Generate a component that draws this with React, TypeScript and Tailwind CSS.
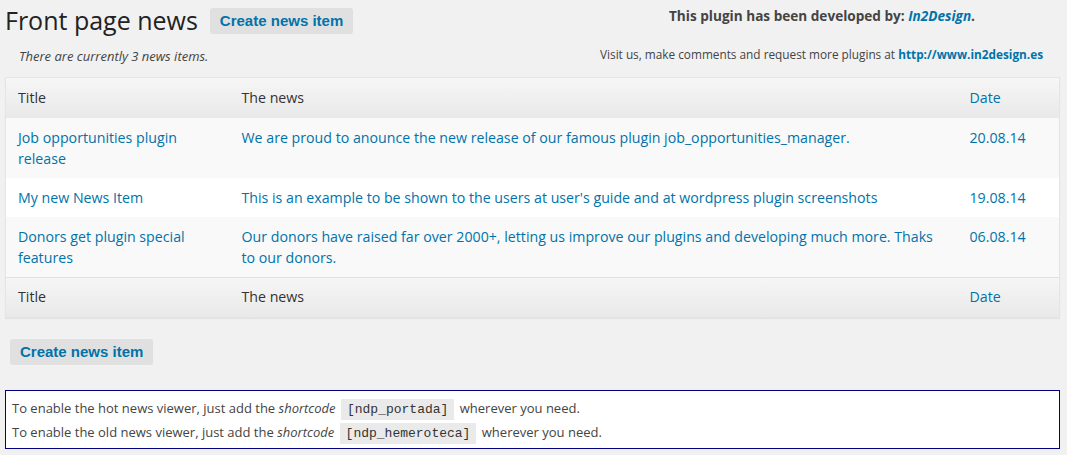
import React from 'react'

interface NewsItem {
  id: number
  title: string
  body: string
  date: string
}

const news: NewsItem[] = [
  {
    id: 1,
    title: 'Job opportunities plugin release',
    body: 'We are proud to anounce the new release of our famous plugin job_opportunities_manager.',
    date: '20.08.14',
  },
  {
    id: 2,
    title: 'My new News Item',
    body: "This is an example to be shown to the users at user's guide and at wordpress plugin screenshots",
    date: '19.08.14',
  },
  {
    id: 3,
    title: 'Donors get plugin special features',
    body: 'Our donors have raised far over 2000+, letting us improve our plugins and developing much more. Thaks to our donors.',
    date: '06.08.14',
  },
]

const CreateButton = () => (
  <button className="h-[26px] px-[10px] rounded-[3px] bg-[#e0e0e0] text-[#0073aa] font-['Liberation_Sans',sans-serif] font-bold text-[15px] leading-[26px]">
    Create news item
  </button>
)

const HeadRow = () => (
  <tr className="h-[40px] bg-gradient-to-b from-[#f6f6f6] to-[#e9e9e9] text-[14.2px] text-[#333]">
    <th className="w-[224px] pl-[12px] text-left font-normal">Title</th>
    <th className="pl-[12px] text-left font-normal">The news</th>
    <th className="w-[102px] pl-[12px] text-left font-normal text-[#0073aa]">Date</th>
  </tr>
)

const Shortcode = ({ children }: { children: React.ReactNode }) => (
  <code className="mx-[2px] bg-[#eaeaea] px-[6px] py-[3px] font-['Liberation_Mono',monospace] text-[13px] text-[#333]">
    {children}
  </code>
)

const App = () => {
  return (
    <div className="min-h-[455px] bg-[#f1f1f1] font-['Open_Sans',sans-serif] text-[#444] pt-[4px] pl-[5px] pr-[7px]">
      <div className="flex justify-between">
        <div>
          <div className="flex items-center">
            <h1 className="text-[25px] leading-[32px] text-[#222] font-normal">Front page news</h1>
            <div className="ml-[12px] mt-[2px]">
              <CreateButton />
            </div>
          </div>
          <p className="mt-[11px] pl-[14px] text-[13px] italic text-[#444] leading-[18px]">
            There are currently 3 news items.
          </p>
        </div>
        <div className="text-right">
          <p className="pt-[3px] pr-[85px] text-[13.6px] font-bold leading-[18px] text-[#444]">
            This plugin has been developed by: <a className="italic text-[#0073aa]">In2Design</a>.
          </p>
          <p className="mt-[21px] pr-[17px] text-[11.8px] leading-[16px] text-[#444]">
            Visit us, make comments and request more plugins at{' '}
            <a className="font-bold text-[#0073aa]">http://www.in2design.es</a>
          </p>
        </div>
      </div>

      <table className="mt-[12px] w-full border border-[#e5e5e5] border-collapse shadow-[0_1px_1px_rgba(0,0,0,0.06)]">
        <thead>
          <HeadRow />
        </thead>
        <tbody className="text-[14.2px] leading-[21px] text-[#0073aa]">
          {news.map((item, i) => (
            <tr key={item.id} className={i % 2 === 0 ? 'bg-[#f9f9f9]' : 'bg-white'}>
              <td className="align-top py-[9px] pl-[12px] pr-[20px]">{item.title}</td>
              <td className="align-top py-[9px] pl-[12px] pr-[20px]">{item.body}</td>
              <td className="align-top py-[9px] pl-[12px]">{item.date}</td>
            </tr>
          ))}
        </tbody>
        <tfoot className="border-t border-[#e1e1e1]">
          <HeadRow />
        </tfoot>
      </table>

      <div className="mt-[21px] pl-[5px]">
        <CreateButton />
      </div>

      <div className="mt-[25px] border border-[#000080] bg-white px-[6px] pt-[6px] pb-[3px] text-[13px] leading-[22px] text-[#444]">
        <p>
          To enable the hot news viewer, just add the <i>shortcode</i> <Shortcode>[ndp_portada]</Shortcode> wherever you need.
        </p>
        <p>
          To enable the old news viewer, just add the <i>shortcode</i> <Shortcode>[ndp_hemeroteca]</Shortcode> wherever you need.
        </p>
      </div>
    </div>
  )
}

export default App
